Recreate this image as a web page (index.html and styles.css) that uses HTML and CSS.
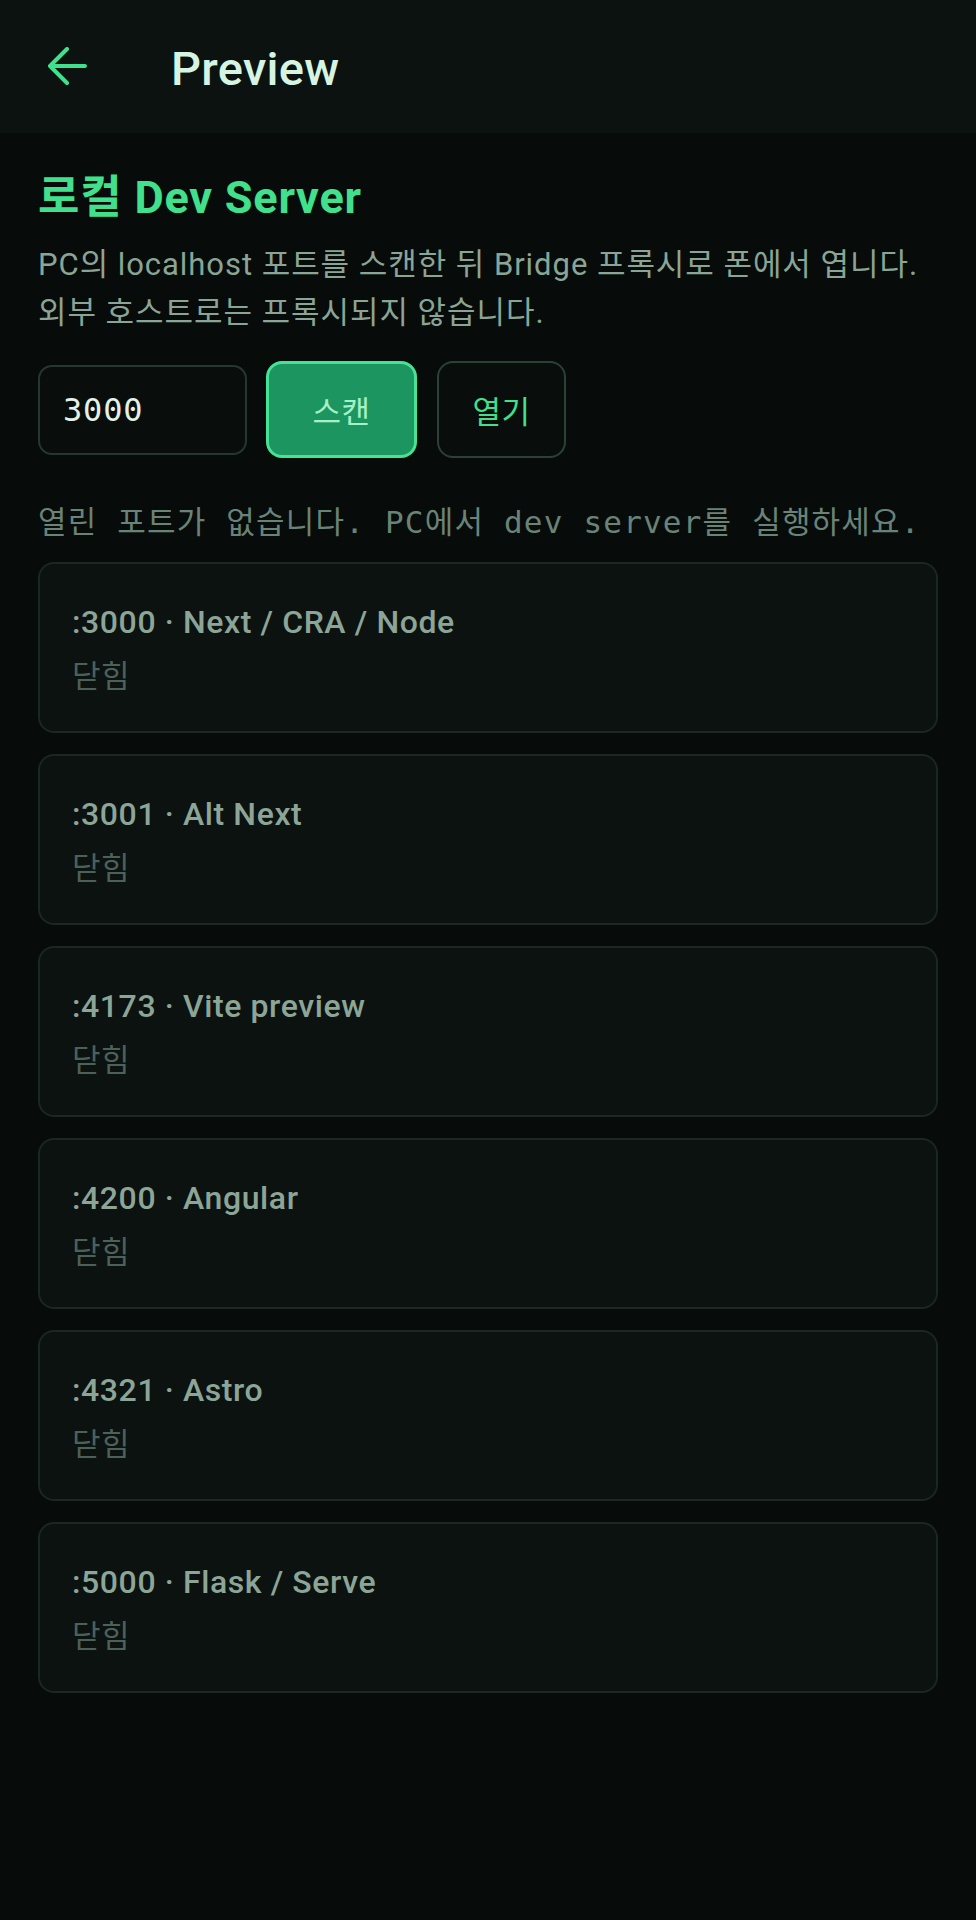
FILE: index.html
```html
<!DOCTYPE html>
<html lang="ko">
<head>
<meta charset="utf-8">
<title>Preview</title>
<link rel="stylesheet" href="styles.css">
</head>
<body>
<header class="topbar">
  <svg class="back" width="40" height="40" viewBox="0 0 40 40" aria-hidden="true">
    <path d="M38 19 H3 M20 2 L3 19 L20 36" fill="none" stroke="#40e08c" stroke-width="4" stroke-linecap="round" stroke-linejoin="round"/>
  </svg>
  <h1 class="topbar-title">Preview</h1>
</header>
<main class="content">
  <h2 class="title">로컬 Dev Server</h2>
  <p class="desc">PC의 localhost 포트를 스캔한 뒤 Bridge 프록시로 폰에서 엽니다.<br>외부 호스트로는 프록시되지 않습니다.</p>
  <div class="controls">
    <div class="port-input">3000</div>
    <button class="btn btn-scan">스캔</button>
    <button class="btn btn-open">열기</button>
  </div>
  <p class="status">열린 포트가 없습니다. PC에서 dev server를 실행하세요.</p>
  <ul class="ports">
    <li class="port-card"><div class="port-name">:3000 · Next / CRA / Node</div><div class="port-state">닫힘</div></li>
    <li class="port-card"><div class="port-name">:3001 · Alt Next</div><div class="port-state">닫힘</div></li>
    <li class="port-card"><div class="port-name">:4173 · Vite preview</div><div class="port-state">닫힘</div></li>
    <li class="port-card"><div class="port-name">:4200 · Angular</div><div class="port-state">닫힘</div></li>
    <li class="port-card"><div class="port-name">:4321 · Astro</div><div class="port-state">닫힘</div></li>
    <li class="port-card"><div class="port-name">:5000 · Flask / Serve</div><div class="port-state">닫힘</div></li>
  </ul>
</main>
</body>
</html>
```
FILE: styles.css
```css
* { box-sizing: border-box; }
html, body {
  margin: 0;
  padding: 0;
  background: #070b0a;
  min-height: 1920px;
}
body {
  font-family: Roboto, "Noto Sans CJK KR", sans-serif;
  color: #8aa596;
}
.topbar {
  height: 133px;
  background: #0b1210;
  display: flex;
  align-items: center;
  padding-left: 47px;
}
.back {
  display: block;
  width: 40px;
  height: 40px;
}
.topbar-title {
  margin: 4px 0 0 84px;
  font-size: 47px;
  font-weight: 500;
  line-height: 56px;
  color: #d6f4e2;
  letter-spacing: 0.3px;
}
.content {
  padding: 40px 38px 0;
}
.title {
  margin: 0 0 18px;
  font-size: 45px;
  line-height: 50px;
  font-weight: 700;
  color: #40e08c;
  letter-spacing: 0.8px;
}
.desc {
  margin: 0;
  font-size: 31px;
  line-height: 48px;
  color: #8aa596;
  letter-spacing: 0.95px;
}
.controls {
  margin-top: 24px;
  display: flex;
  align-items: center;
  gap: 19px;
}
.port-input {
  width: 209px;
  height: 90px;
  border: 2px solid #27362f;
  border-radius: 14px;
  background: #090e0c;
  padding-left: 23px;
  display: flex;
  align-items: center;
  font-family: "DejaVu Sans Mono", monospace;
  font-size: 32px;
  letter-spacing: 0.8px;
  color: #e2f2e8;
}
.btn {
  height: 97px;
  border-radius: 16px;
  font-family: Roboto, "Noto Sans CJK KR", sans-serif;
  font-size: 31px;
  letter-spacing: 0.5px;
  padding: 0;
  display: flex;
  align-items: center;
  justify-content: center;
}
.btn-scan {
  width: 151px;
  background: #1c9560;
  border: 3px solid #45e393;
  color: #a6f0c6;
}
.btn-open {
  width: 129px;
  margin-left: 1px;
  background: #090e0c;
  border: 2px solid #2b4136;
  color: #40e08c;
}
.status {
  margin: 44px 0 20px;
  font-family: "DejaVu Sans Mono", "Noto Sans CJK KR", monospace;
  font-size: 31px;
  line-height: 40px;
  color: #6a8377;
  letter-spacing: 1.2px;
  white-space: nowrap;
}
.ports {
  list-style: none;
  margin: 0;
  padding: 0;
  display: flex;
  flex-direction: column;
  gap: 21px;
}
.port-card {
  height: 171px;
  border: 2px solid #1a2722;
  border-radius: 16px;
  background: #0b1210;
  padding: 38px 32px 0;
  display: flex;
  flex-direction: column;
  gap: 15px;
}
.port-name {
  font-size: 32px;
  line-height: 40px;
  font-weight: 500;
  color: #8ca597;
  letter-spacing: 0.6px;
}
.port-state {
  font-size: 31px;
  line-height: 40px;
  color: #4c6158;
  letter-spacing: 0.5px;
}
```
